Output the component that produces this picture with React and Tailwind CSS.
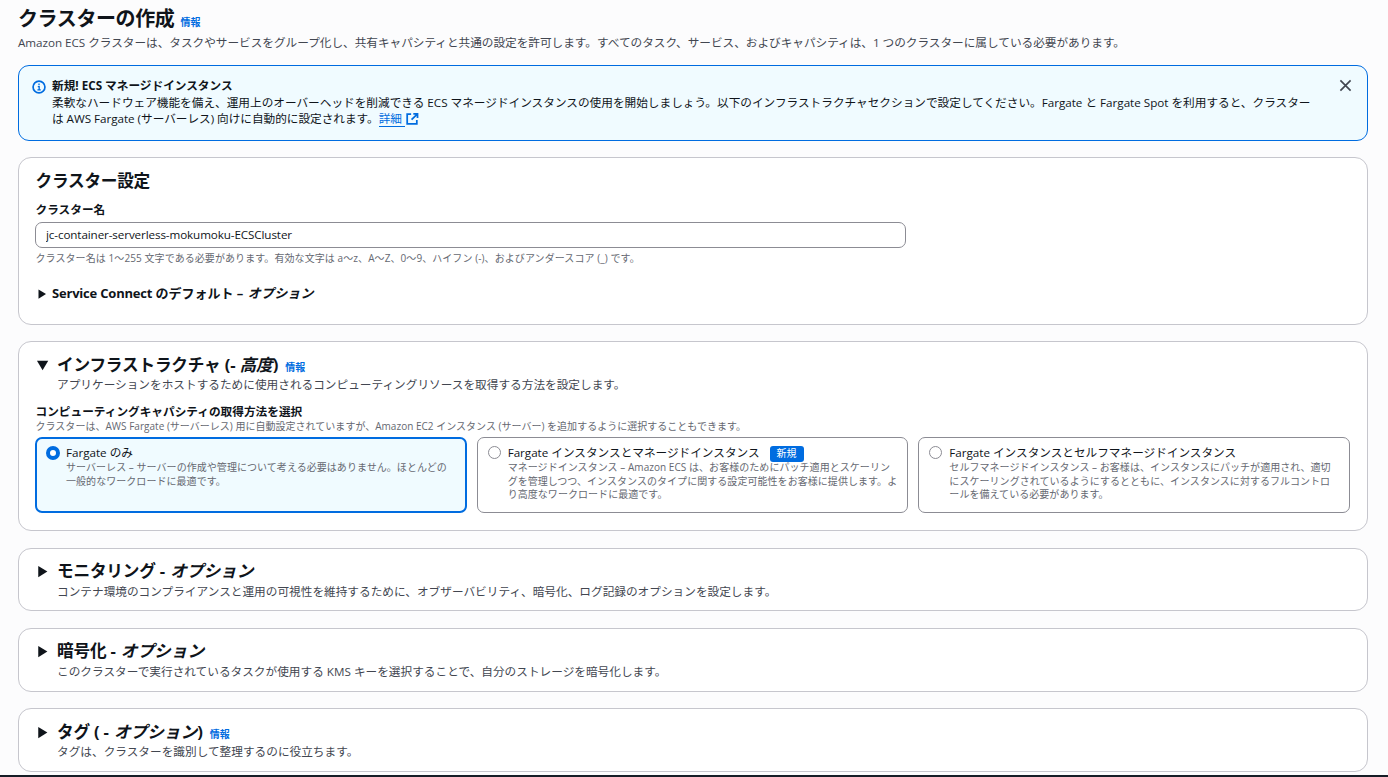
import React from 'react'

const InfoLink = () => (
  <a href="#" className="text-[10px] leading-[17px] font-bold tracking-[0.05px] text-[#006ce0]">
    情報
  </a>
);

const Caret = ({ open = false, small = false }) => (
  <svg
    viewBox="0 0 16 16"
    className={small ? 'w-[14px] h-[14px] shrink-0' : 'w-[17px] h-[17px] shrink-0'}
    fill="#0f141a"
  >
    {open ? <path d="M2.8 3.6h10.6L8.1 12.4z" /> : <path d="M4 2.8v10.6l8.6-5.3z" />}
  </svg>
);

const Panel = ({ className, children }) => (
  <section className={`bg-white border border-[#c6c6cd] rounded-[13px] px-4 ${className}`}>
    {children}
  </section>
);

const PanelHeader = ({ open, title, emphasis, after, info, description, spaced }) => (
  <div className="flex">
    <div className="w-[22px] pt-[2px] -ml-px mr-px shrink-0">
      <Caret open={open} />
    </div>
    <div>
      <div className="flex items-baseline gap-[7px]">
        <h2 className="text-[16.67px] leading-[20px] h-5 font-bold tracking-[-0.2px] whitespace-pre">
          {title}
          <em className={open ? 'tracking-normal' : 'tracking-normal ml-px'}>{emphasis}</em>
          {after}
        </h2>
        {info && <InfoLink />}
      </div>
      <p
        className={
          spaced
            ? 'mt-[2px] text-[11.67px] leading-[17px] text-[#424650] whitespace-nowrap'
            : 'text-[11.67px] leading-[17px] text-[#424650] whitespace-nowrap'
        }
      >
        {description}
      </p>
    </div>
  </div>
);

const options = [
  {
    title: 'Fargate のみ',
    lines: [
      'サーバーレス – サーバーの作成や管理について考える必要はありません。ほとんどの',
      '一般的なワークロードに最適です。',
    ],
    selected: true,
  },
  {
    title: 'Fargate インスタンスとマネージドインスタンス',
    badge: '新規',
    lines: [
      'マネージドインスタンス – Amazon ECS は、お客様のためにパッチ適用とスケーリン',
      'グを管理しつつ、インスタンスのタイプに関する設定可能性をお客様に提供します。よ',
      'り高度なワークロードに最適です。',
    ],
  },
  {
    title: 'Fargate インスタンスとセルフマネージドインスタンス',
    lines: [
      'セルフマネージドインスタンス – お客様は、インスタンスにパッチが適用され、適切',
      'にスケーリングされているようにするとともに、インスタンスに対するフルコントロ',
      'ールを備えている必要があります。',
    ],
  },
];

const OptionTile = ({ option }) => (
  <label
    className={
      option.selected
        ? 'flex h-[76px] rounded-[7px] border-2 border-[#006ce0] bg-[#f0fbff] pl-[9px] pt-[7px]'
        : 'flex h-[76px] rounded-[7px] border border-[#8c8c94] bg-white pl-[10px] pt-[8px]'
    }
  >
    <span
      className={
        option.selected
          ? 'w-[14px] h-[14px] -ml-[0.5px] shrink-0 rounded-full border-[4.5px] border-[#006ce0] bg-white'
          : 'w-[13px] h-[13px] shrink-0 rounded-full border border-[#8c8c94] bg-white'
      }
    />
    <div className={option.selected ? 'pl-[6.5px]' : 'pl-[7px]'}>
      <div className="flex items-center h-[14px] text-[11.67px] leading-[14px] tracking-[-0.02px] whitespace-nowrap">
        {option.title}
        {option.badge && (
          <span className="ml-[10px] mt-[2px] h-4 px-[7px] rounded-[3px] bg-[#006ce0] text-white text-[10px] leading-[15px]">
            {option.badge}
          </span>
        )}
      </div>
      <div className="mt-px text-[10px] leading-[13.5px] tracking-[0.05px] text-[#656871] whitespace-nowrap">
        {option.lines.map((line) => (
          <div key={line}>{line}</div>
        ))}
      </div>
    </div>
  </label>
);

export default function App() {
  const [clusterName, setClusterName] = React.useState('jc-container-serverless-mokumoku-ECSCluster');

  return (
    <div
      lang="ja"
      className="h-[777px] overflow-hidden flex flex-col bg-[#fcfcfd] text-[#0f141a] text-[11.67px] font-['Open_Sans','Noto_Sans_CJK_JP',sans-serif]"
    >
      <main className="flex-1 min-h-0 pl-[18px] pr-5 pt-[7px]">
        <header className="h-[58px]">
          <div className="flex items-baseline gap-[6px]">
            <h1 className="text-[20px] leading-6 font-bold tracking-[-0.4px]">クラスターの作成</h1>
            <InfoLink />
          </div>
          <p className="pt-[3px] leading-[17px] tracking-[-0.03px] text-[#424650] whitespace-nowrap">
            Amazon ECS クラスターは、タスクやサービスをグループ化し、共有キャパシティと共通の設定を許可します。すべてのタスク、サービス、およびキャパシティは、1 つのクラスターに属している必要があります。
          </p>
        </header>

        {/* Alert */}
        <div className="flex h-[76px] rounded-[11px] border border-[#006ce0] bg-[#f0fbff] pl-[13px] pr-[15px] pt-[11px]">
          <svg viewBox="0 0 16 16" className="w-[14px] h-[14px] mt-[2.5px] shrink-0" fill="none" stroke="#006ce0" strokeWidth="1.9">
            <circle cx="8" cy="8" r="6.8" />
            <path d="M8.2 11.8V7.5H6.6M6.2 11.3h3.8M8 4v2" strokeWidth="1.5" />
          </svg>
          <div className="flex-1 pl-[6px] whitespace-nowrap">
            <p className="leading-[17px] font-bold">新規! ECS マネージドインスタンス</p>
            <p className="leading-[17px] tracking-[-0.01px]">
              柔軟なハードウェア機能を備え、運用上のオーバーヘッドを削減できる ECS マネージドインスタンスの使用を開始しましょう。以下のインフラストラクチャセクションで設定してください。Fargate と Fargate Spot を利用すると、クラスター
            </p>
            <p className="leading-[16px] tracking-[-0.03px] flex items-center">
              は AWS Fargate (サーバーレス) 向けに自動的に設定されます。
              <a href="#" className="flex items-center text-[#006ce0]">
                <span className="border-b border-[#006ce0] h-[16px] leading-[16px] whitespace-pre">詳細 </span>
                <svg viewBox="0 0 16 16" className="w-[14px] h-[14px]" fill="none" stroke="#006ce0" strokeWidth="2">
                  <path d="M7 2.5H2.5v11h11V9M9.5 2h4.8v4.8M14 2.3 7.5 8.8" />
                </svg>
              </a>
            </p>
          </div>
          <button type="button" className="self-start mt-[2px]">
            <svg viewBox="0 0 14 14" className="w-[13px] h-[13px]" stroke="#424650" strokeWidth="1.8">
              <path d="M1.5 1.5l11 11M12.5 1.5l-11 11" />
            </svg>
          </button>
        </div>

        {/* Cluster configuration */}
        <Panel className="mt-4 h-[168px] pt-[13px]">
          <h2 className="pl-[0.5px] text-[16.67px] leading-5 font-bold tracking-[-0.25px]">クラスター設定</h2>
          <label className="block pl-[0.5px] mt-[10px] leading-[17px] font-bold">クラスター名</label>
          <input
            type="text"
            className="block mt-[4px] w-[871px] h-[26px] px-[10px] pb-[2px] tracking-[-0.11px] rounded-[7px] border border-[#8c8c94] bg-white outline-none"
            value={clusterName}
            onChange={(e) => setClusterName(e.target.value)}
          />
          <p className="pl-[0.5px] mt-[4px] text-[10px] leading-[13px] tracking-[0.08px] text-[#656871]">
            クラスター名は 1～255 文字である必要があります。有効な文字は a～z、A～Z、0～9、ハイフン (-)、およびアンダースコア (_) です。
          </p>
          <div className="flex items-center mt-[20px] h-[17px]">
            <Caret small />
            <h3 className="pl-[3px] text-[13px] leading-[17px] font-bold">
              <span className="tracking-[-0.2px]">Service Connect </span>
              のデフォルト – <em className="ml-px tracking-[0.2px]">オプション</em>
            </h3>
          </div>
        </Panel>

        {/* Infrastructure */}
        <Panel className="mt-4 h-[190px] pt-[13px]">
          <PanelHeader
            open
            title="インフラストラクチャ (- "
            emphasis="高度"
            after=")"
            info
            description="アプリケーションをホストするために使用されるコンピューティングリソースを取得する方法を設定します。"
          />
          <p className="pl-[0.5px] mt-[10px] leading-[17px] font-bold">コンピューティングキャパシティの取得方法を選択</p>
          <p className="pl-[0.5px] text-[10px] leading-[13px] tracking-[0.02px] text-[#656871]">
            クラスターは、AWS Fargate (サーバーレス) 用に自動設定されていますが、Amazon EC2 インスタンス (サーバー) を追加するように選択することもできます。
          </p>
          <div className="grid grid-cols-3 gap-[10px] mt-[4px] pr-px">
            {options.map((option) => (
              <OptionTile key={option.title} option={option} />
            ))}
          </div>
        </Panel>

        <Panel className="mt-[17px] h-[63px] pt-[12px]">
          <PanelHeader
            spaced
            title="モニタリング - "
            emphasis="オプション"
            description="コンテナ環境のコンプライアンスと運用の可視性を維持するために、オブザーバビリティ、暗号化、ログ記録のオプションを設定します。"
          />
        </Panel>

        <Panel className="mt-[17px] h-[64px] pt-[12px]">
          <PanelHeader
            spaced
            title="暗号化 - "
            emphasis="オプション"
            description="このクラスターで実行されているタスクが使用する KMS キーを選択することで、自分のストレージを暗号化します。"
          />
        </Panel>

        <Panel className="mt-4 h-[64px] pt-[13px]">
          <PanelHeader
            title="タグ ( - "
            emphasis="オプション"
            after=")"
            info
            description="タグは、クラスターを識別して整理するのに役立ちます。"
          />
        </Panel>
      </main>
      <footer className="h-[2px] bg-[#161d26]" />
    </div>
  );
}
